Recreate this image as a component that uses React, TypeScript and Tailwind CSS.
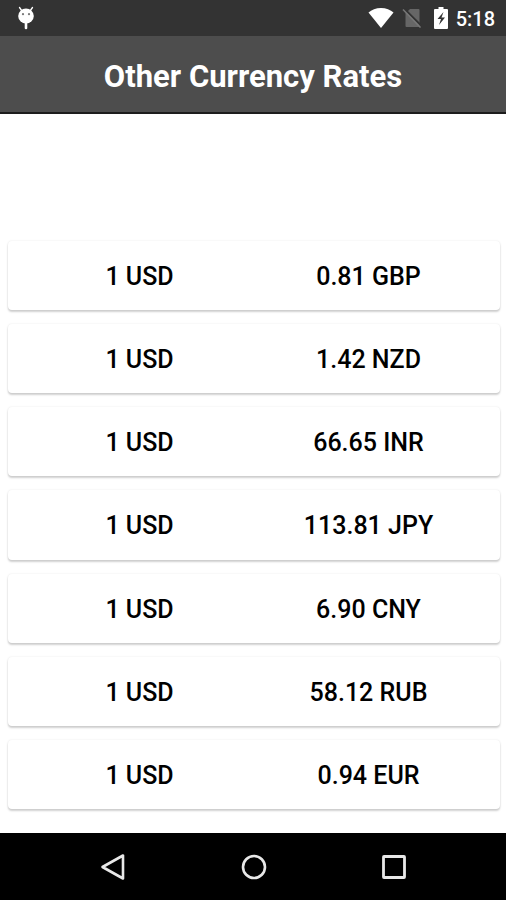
const RATES = [
  { code: "GBP", rate: "0.81" },
  { code: "NZD", rate: "1.42" },
  { code: "INR", rate: "66.65" },
  { code: "JPY", rate: "113.81" },
  { code: "CNY", rate: "6.90" },
  { code: "RUB", rate: "58.12" },
  { code: "EUR", rate: "0.94" },
];

function DebugIcon() {
  return (
    <svg viewBox="0 0 18 24" className="w-[18px] h-6">
      <path d="M2.5 1.5l2.500 3.500M15.500 1.500L13 5" stroke="white" strokeWidth="1.300" strokeLinecap="round" />
      <ellipse cx="9" cy="10" rx="7.800" ry="7.500" fill="white" />
      <path d="M9 16v6" stroke="white" strokeWidth="2.600" strokeLinecap="round" />
      <circle cx="6" cy="8.200" r="1.100" fill="#777" />
      <circle cx="12" cy="8.200" r="1.100" fill="#777" />
    </svg>
  );
}

function WifiIcon() {
  return (
    <svg viewBox="0 0 26 20" className="w-[26px] h-5">
      <path d="M13 20L0.500 4.500C3.500 1.800 8 0 13 0s9.500 1.800 12.500 4.500z" fill="white" />
    </svg>
  );
}

function NoSimIcon() {
  return (
    <svg viewBox="0 0 20 20" className="w-5 h-5">
      <path d="M8 1h8.500q1 0 1 1v16q0 1-1 1h-12q-1 0-1-1V5.500z" fill="#666" />
      <path d="M2 0.500L19.500 18" stroke="#333" strokeWidth="2" />
      <path d="M1 1.500L18.500 19.500" stroke="#777" strokeWidth="1.500" />
    </svg>
  );
}

function BatteryIcon() {
  return (
    <svg viewBox="0 0 14 22" className="w-[14px] h-[22px]">
      <path d="M4.500 0h5v2H13q1 0 1 1v18q0 1-1 1H1q-1 0-1-1V3q0-1 1-1h3.500z" fill="white" />
      <path d="M9.500 5L3.500 12h3.500L5 18l6-7.500H7.500z" fill="#333" />
    </svg>
  );
}

function StatusBar() {
  return (
    <div className="h-9 bg-[#333] flex items-center pl-[17px] pr-[11px] text-white">
      <DebugIcon />
      <div className="ml-auto flex items-center">
        <WifiIcon />
        <span className="ml-2 flex"><NoSimIcon /></span>
        <span className="ml-3 flex"><BatteryIcon /></span>
        <span className="ml-2 pt-0.5 text-[20px] leading-6 font-medium">5:18</span>
      </div>
    </div>
  );
}

function NavBar() {
  return (
    <nav className="h-[67px] bg-black flex items-center justify-center gap-[100px] pl-0.5">
      <button type="button" aria-label="Back" className="w-10 h-10 flex items-center justify-center">
        <svg viewBox="0 0 28 28" className="w-7 h-7" fill="none" stroke="#e8e8e8" strokeWidth="2.600" strokeLinejoin="round">
          <path d="M23 2.500v23L2.500 14z" />
        </svg>
      </button>
      <button type="button" aria-label="Home" className="w-10 h-10 flex items-center justify-center">
        <svg viewBox="0 0 28 28" className="w-7 h-7" fill="none" stroke="#e8e8e8" strokeWidth="2.600">
          <circle cx="14" cy="14" r="11" />
        </svg>
      </button>
      <button type="button" aria-label="Recent apps" className="w-10 h-10 flex items-center justify-center">
        <svg viewBox="0 0 28 28" className="w-7 h-7" fill="none" stroke="#e8e8e8" strokeWidth="2.800" strokeLinejoin="round">
          <rect x="3.500" y="3.500" width="21" height="21" rx="0.500" />
        </svg>
      </button>
    </nav>
  );
}

export default function App() {
  return (
    <div className="min-h-screen flex flex-col bg-white font-['Roboto',sans-serif]">
      <StatusBar />
      <header className="h-[78px] bg-[#4d4d4d] border-b-2 border-[#1c1c1c] flex items-center justify-center pt-1.5">
        <h1 className="text-[31px] leading-9 font-bold text-white">Other Currency Rates</h1>
      </header>
      <main className="flex-1 flex flex-col pt-[127px] pb-6 pl-2 pr-[6px]">
        <ul className="flex-1 flex flex-col gap-[14px]">
          {RATES.map((item) => (
            <li
              key={item.code}
              className="flex-1 grid grid-cols-2 items-center px-[17px] pt-[3px] rounded-[4px] bg-white text-center text-[25px] leading-8 font-medium text-black shadow-[0_2px_2px_rgba(0,0,0,0.18),0_0_2px_rgba(0,0,0,0.1)]"
            >
              <span>1 USD</span>
              <span>{item.rate} {item.code}</span>
            </li>
          ))}
        </ul>
      </main>
      <NavBar />
    </div>
  );
}
